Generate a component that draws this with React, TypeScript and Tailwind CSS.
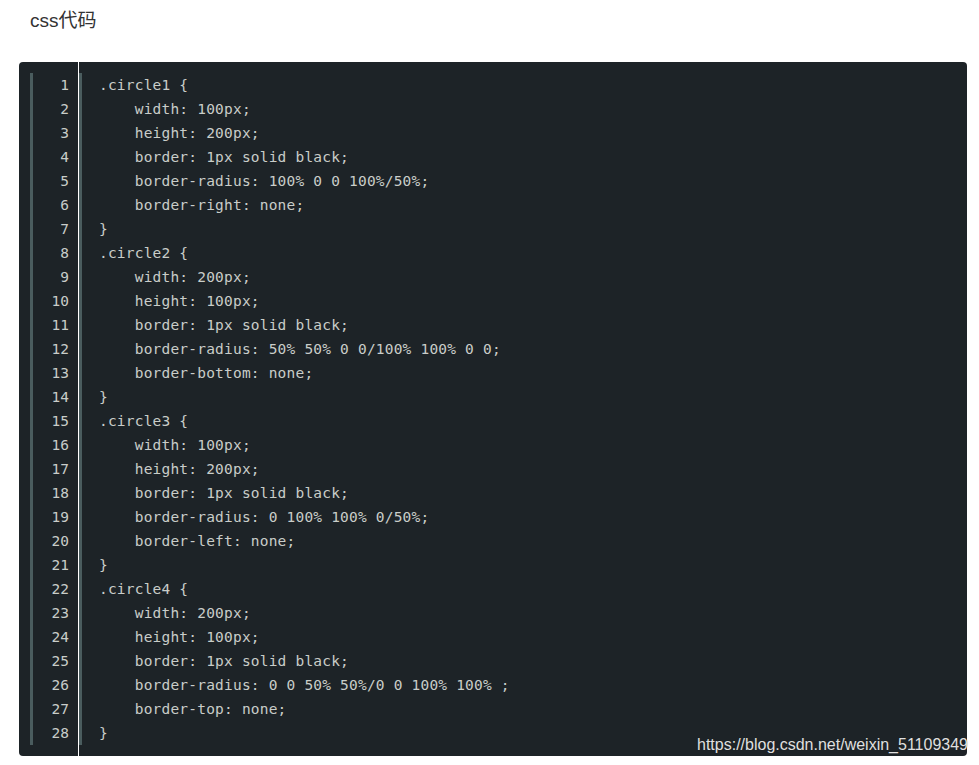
import React from "react";

const code = `.circle1 {
    width: 100px;
    height: 200px;
    border: 1px solid black;
    border-radius: 100% 0 0 100%/50%;
    border-right: none;
}
.circle2 {
    width: 200px;
    height: 100px;
    border: 1px solid black;
    border-radius: 50% 50% 0 0/100% 100% 0 0;
    border-bottom: none;
}
.circle3 {
    width: 100px;
    height: 200px;
    border: 1px solid black;
    border-radius: 0 100% 100% 0/50%;
    border-left: none;
}
.circle4 {
    width: 200px;
    height: 100px;
    border: 1px solid black;
    border-radius: 0 0 50% 50%/0 0 100% 100% ;
    border-top: none;
}`;

const lines = code.split("\n");

export default function App() {
  return (
    <div className="relative w-[979px] h-[765px] bg-white overflow-hidden font-['Liberation_Sans',Arial,sans-serif]">
      <div className="pl-[30px] pt-[8px] text-[19px] leading-[26px] text-[#333] font-['Liberation_Sans','Noto_Sans_CJK_SC',sans-serif]">
        css代码
      </div>

      <div className="ml-[19px] mt-[28px] w-[948px] h-[694px] bg-[#1d2327] rounded-[4px] flex font-['DejaVu_Sans_Mono','Liberation_Mono',monospace] text-[14.5px] leading-[24px] text-[#c9cdc9]">
        <div className="border-r border-white pl-[11px] pr-[9px] py-[11px]">
          <div className="border-l-[3px] border-[#4a5c5e] w-[39px] text-right">
            {lines.map((_, i) => (
              <div key={i} className="h-[24px]">
                {i + 1}
              </div>
            ))}
          </div>
        </div>
        <div className="py-[11px] flex-1">
          <div className="border-l-[3px] border-[#4a5c5e] pl-[17px]">
            {lines.map((l, i) => (
              <div key={i} className="h-[24px] whitespace-pre [letter-spacing:0.2px]">
                {l}
              </div>
            ))}
          </div>
        </div>
      </div>

      <div className="absolute left-[697px] top-[735px] text-[16px] leading-[20px] text-[#e0e0e0] whitespace-nowrap [text-shadow:0_0_1px_rgba(0,0,0,0.4)]">
        https://blog.csdn.net/weixin_51109349
      </div>
    </div>
  );
}
